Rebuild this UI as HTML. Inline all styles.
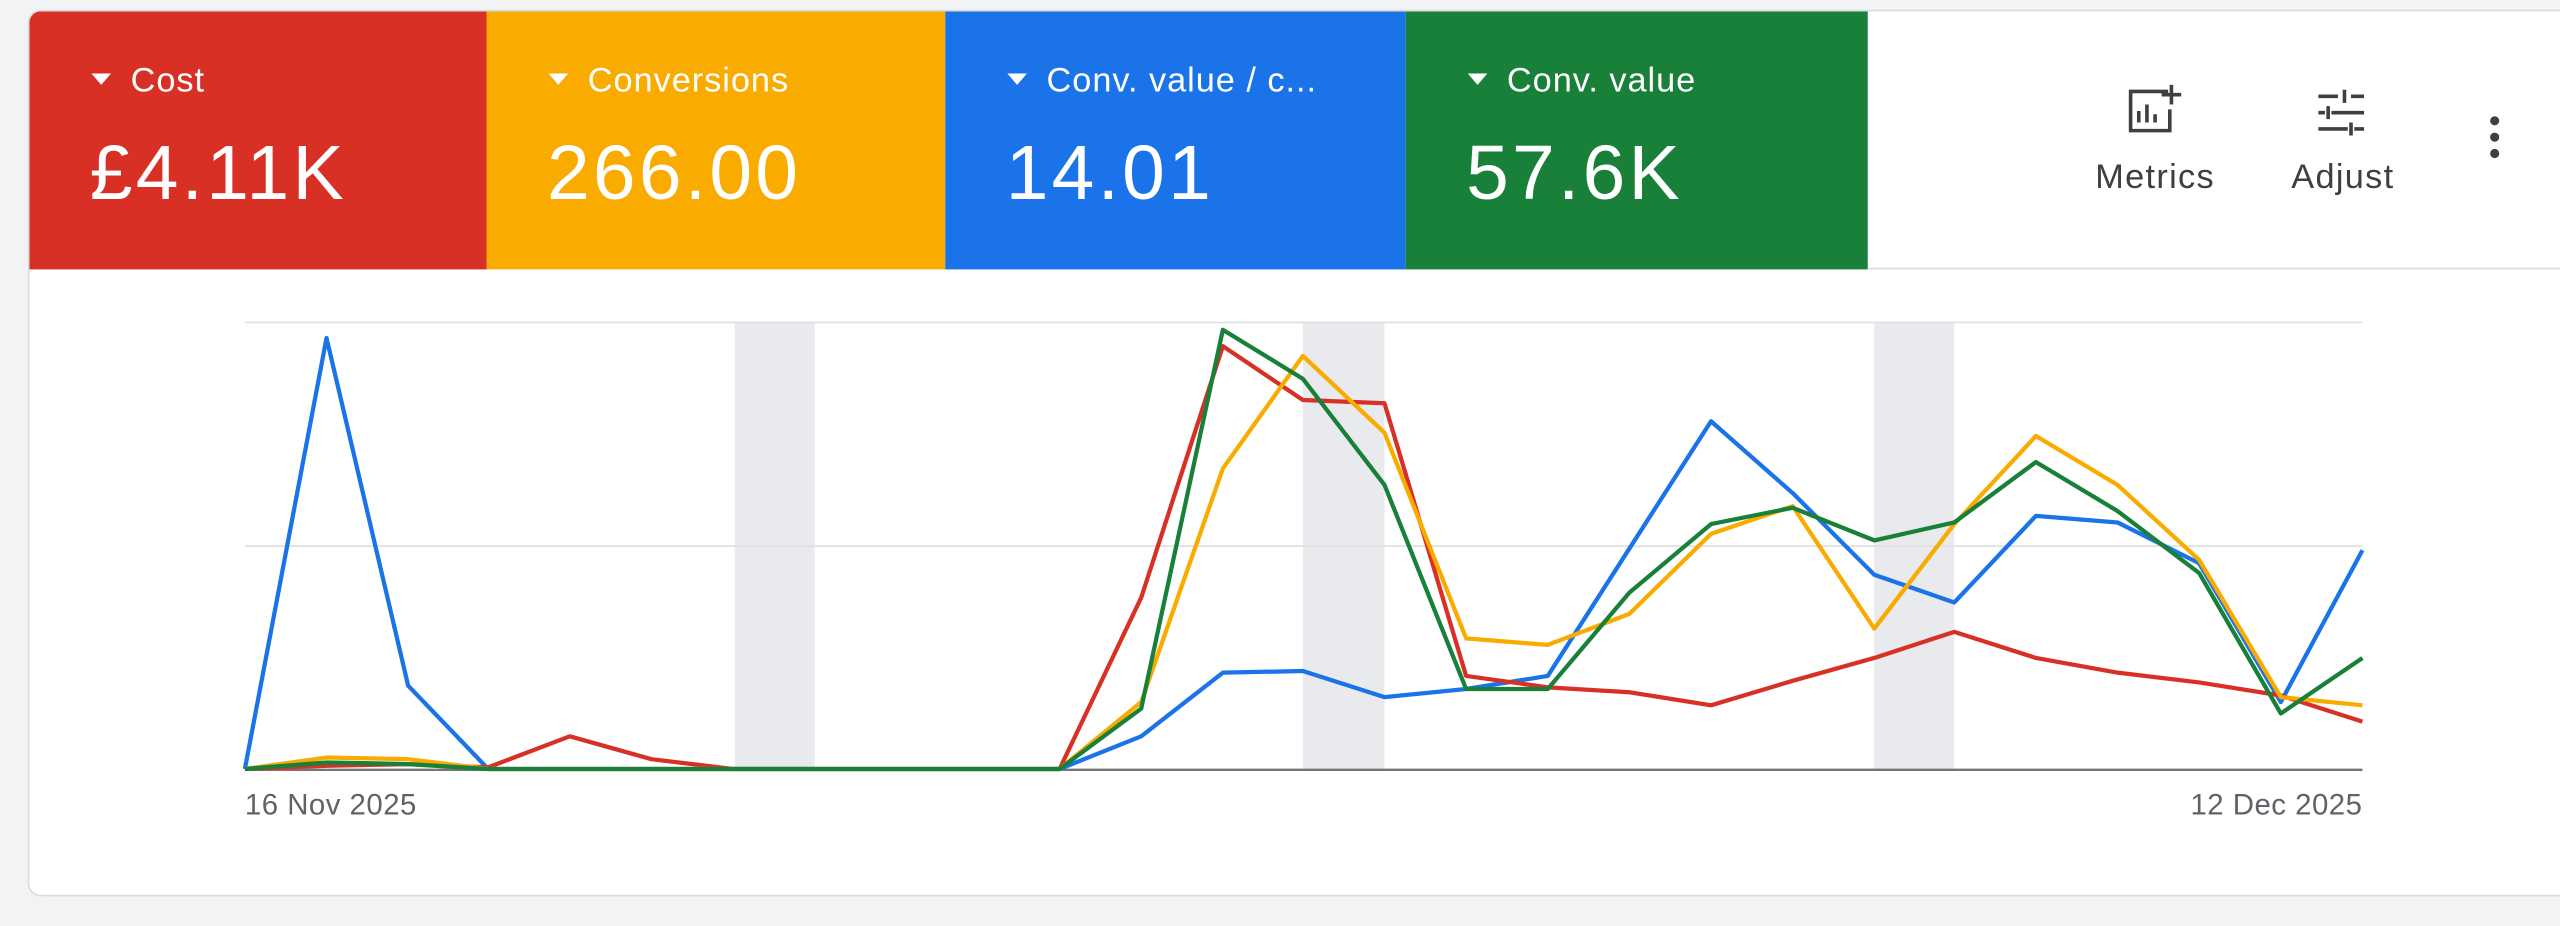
<!DOCTYPE html>
<html><head><meta charset="utf-8"><style>
html,body{margin:0;padding:0;width:2560px;height:926px;overflow:hidden;background:#f1f3f4;font-family:"Liberation Sans",Arial,sans-serif}
#w{position:absolute;left:0;top:0;width:1568px;height:567px;transform:scale(1.63265);transform-origin:0 0}
.card{position:absolute;left:17px;top:6px;width:1570px;height:541px;background:#fff;border:1px solid #dadce0;border-radius:8px;overflow:hidden}
.tile{position:absolute;top:0;height:158px;color:#fff}
.lab{position:absolute;left:38px;top:31px;font-size:21px;letter-spacing:0.6px}
.lab:before{content:"";display:inline-block;border-left:6px solid transparent;border-right:6px solid transparent;border-top:7px solid #fff;margin-right:12px;vertical-align:4px}
.val{position:absolute;left:37px;top:71px;font-size:47px;letter-spacing:2px}
.btn{position:absolute;top:90px;font-size:21px;letter-spacing:0.8px;color:#3c4043;transform:translateX(-50%)}
</style></head><body><div id="w">
<div class="card">
 <div class="tile" style="left:0;width:280px;background:#d93025"><div class="lab">Cost</div><div class="val">£4.11K</div></div>
 <div class="tile" style="left:280px;width:281px;background:#f9ab00"><div class="lab">Conversions</div><div class="val">266.00</div></div>
 <div class="tile" style="left:561px;width:282px;background:#1a73e8"><div class="lab">Conv. value / c...</div><div class="val">14.01</div></div>
 <div class="tile" style="left:843px;width:283px;background:#188038"><div class="lab">Conv. value</div><div class="val">57.6K</div></div>
 <div style="position:absolute;left:1126px;top:157px;width:500px;height:1px;background:#dadce0"></div>
 <div class="btn" style="left:1302px">Metrics</div>
 <div class="btn" style="left:1417px">Adjust</div>
</div>
<svg style="position:absolute;left:0;top:0" width="1568" height="567" viewBox="0 0 1568 567">
 <g fill="none" stroke="#3c4043" stroke-width="2.2">
  <path d="M1328 56H1305V80H1329V67"/><path d="M1310 75V68M1315 75V64M1320 75V70"/><path d="M1330 52V64M1324 58H1336"/>
  <path d="M1420 59H1432M1440 59H1448M1436 55V63M1420 69H1424M1428 69H1448M1426 65V73M1420 79H1438M1442 79H1448M1440 75V83"/>
 </g>
 <circle cx="1528" cy="74" r="2.8" fill="#3c4043"/><circle cx="1528" cy="84" r="2.8" fill="#3c4043"/><circle cx="1528" cy="94" r="2.8" fill="#3c4043"/>
 <g fill="#e8eaed"><rect x="450" y="197" width="49" height="274"/><rect x="798" y="197" width="50" height="274"/><rect x="1148" y="197" width="49" height="274"/></g>
 <g stroke="#e0e0e0" stroke-width="1"><path d="M150 197.5H1447M150 334.5H1447"/></g>
 <path d="M150 471.5H1447" stroke="#757575" stroke-width="1.5"/>
 <g font-size="18" fill="#5f6368" letter-spacing="0.3"><text x="150" y="499">16 Nov 2025</text><text x="1447" y="499" text-anchor="end">12 Dec 2025</text></g>
 <g fill="none" stroke-width="2.6" stroke-linejoin="round">
  <polyline stroke="#1a73e8" points="150,471 200,207 250,420 299,471 349,471 399,471 449,471 499,471 549,471 599,471 649,471 699,451 749,412 798,411 848,427 898,422 948,414 998,336 1048,258 1098,302 1148,352 1197,369 1247,316 1297,320 1347,345 1397,430 1447,337"/>
  <polyline stroke="#d93025" points="150,471 200,469 250,468 299,470 349,451 399,465 449,471 499,471 549,471 599,471 649,471 699,366 749,212 798,245 848,247 898,414 948,421 998,424 1048,432 1098,417 1148,403 1197,387 1247,403 1297,412 1347,418 1397,426 1447,442"/>
  <polyline stroke="#f9ab00" points="150,471 200,464 250,465 299,471 349,471 399,471 449,471 499,471 549,471 599,471 649,471 699,430 749,287 798,218 848,265 898,391 948,395 998,376 1048,327 1098,310 1148,385 1197,321 1247,267 1297,297 1347,343 1397,427 1447,432"/>
  <polyline stroke="#188038" points="150,471 200,467 250,468 299,471 349,471 399,471 449,471 499,471 549,471 599,471 649,471 699,434 749,202 798,232 848,297 898,422 948,422 998,363 1048,321 1098,311 1148,331 1197,320 1247,283 1297,313 1347,351 1397,437 1447,403"/>
 </g>
</svg>
</div></body></html>
